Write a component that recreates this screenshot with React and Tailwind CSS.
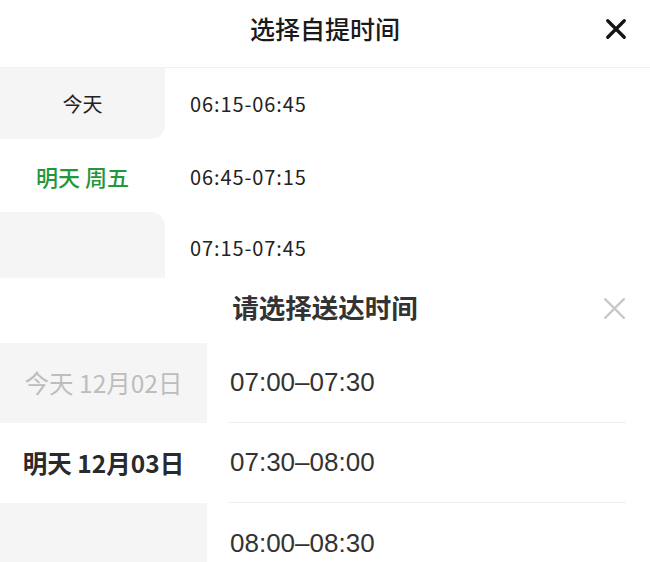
import React from 'react';

const cjk = { fontFamily: '"Noto Sans CJK SC", "Noto Sans", sans-serif' };
const latin = { fontFamily: '"Liberation Sans", Arial, "Noto Sans CJK SC", sans-serif' };

function CloseIcon({ size, stroke, color }) {
  return (
    <svg width={size} height={size} viewBox="0 0 24 24" fill="none">
      <path d="M3 3L21 21M21 3L3 21" stroke={color} strokeWidth={stroke} strokeLinecap="round" />
    </svg>
  );
}

function PickupPanel() {
  const slots = ['06:15-06:45', '06:45-07:15', '07:15-07:45'];
  return (
    <div className="h-[280px] bg-white overflow-hidden" style={cjk}>
      <div className="h-[68px] border-b border-[#f0f0f0] flex items-center justify-center relative">
        <span className="text-[25px] font-medium text-[#1a1a1a] -mt-[10px]">选择自提时间</span>
        <div className="absolute right-[23px] top-[18px]">
          <CloseIcon size={22} stroke={3.6} color="#141414" />
        </div>
      </div>
      <div className="flex">
        <div className="w-[165px] bg-white flex flex-col">
          <div className="h-[71px] bg-[#f5f5f5] rounded-br-[14px] flex items-center justify-center text-[20px] text-[#222]">今天</div>
          <div className="h-[73px] bg-white flex items-center justify-center text-[22px] font-medium text-[#23973a] pt-[2px]">明天 周五</div>
          <div className="h-[66px] bg-[#f5f5f5] rounded-tr-[14px]"></div>
        </div>
        <div className="flex-1 bg-white flex flex-col pl-[25px]">
          <div className="h-[71px] flex items-center text-[20px] text-[#222] tracking-[0.9px]">{slots[0]}</div>
          <div className="h-[73px] flex items-center text-[20px] text-[#222] tracking-[0.9px] pt-[2px]">{slots[1]}</div>
          <div className="h-[66px] flex items-center text-[20px] text-[#222] tracking-[0.9px] pt-[6px]">{slots[2]}</div>
        </div>
      </div>
    </div>
  );
}

function DeliveryPanel() {
  const slots = ['07:00–07:30', '07:30–08:00', '08:00–08:30'];
  return (
    <div className="h-[282px] bg-white overflow-hidden" style={cjk}>
      <div className="h-[63px] flex items-center justify-center relative">
        <span className="text-[26.5px] font-bold text-[#333] -mt-[10px]">请选择送达时间</span>
        <div className="absolute right-[23px] top-[16px]">
          <CloseIcon size={25} stroke={2.2} color="#c8c8c8" />
        </div>
      </div>
      <div className="flex">
        <div className="w-[207px] flex flex-col">
          <div className="h-[80px] bg-[#f5f5f5] flex items-center justify-center text-[24.5px] text-[#bdbdbd]">今天 12月02日</div>
          <div className="h-[80px] bg-white flex items-center justify-center text-[24.5px] font-bold text-[#2a2a2a]">明天 12月03日</div>
          <div className="h-[80px] bg-[#f5f5f5]"></div>
        </div>
        <div className="flex-1 flex flex-col pl-[21px] pr-[24px]">
          {slots.map((s, i) => (
            <div
              key={s}
              className={`h-[80px] flex items-center text-[26px] text-[#333] ${i < 2 ? 'border-b border-[#f0f0f0]' : ''}`}
              style={latin}
            >
              <span className="pl-[2px]">{s}</span>
            </div>
          ))}
        </div>
      </div>
    </div>
  );
}

export default function App() {
  return (
    <div className="w-[650px] h-[562px] bg-white overflow-hidden">
      <PickupPanel />
      <DeliveryPanel />
    </div>
  );
}
